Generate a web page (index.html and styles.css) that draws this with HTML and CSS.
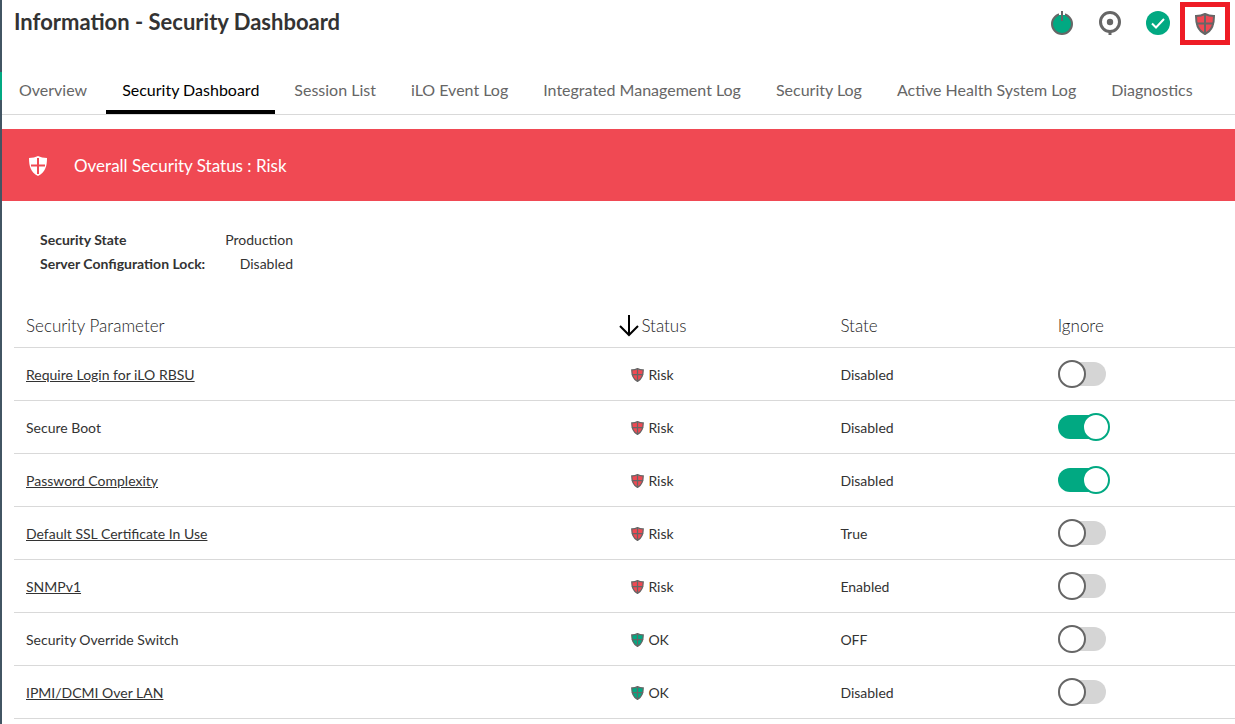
FILE: index.html
```html
<!DOCTYPE html>
<html lang="en">
<head>
<meta charset="utf-8">
<title>Information - Security Dashboard</title>
<link rel="stylesheet" href="styles.css">
</head>
<body>
<svg class="defs" aria-hidden="true">
  <symbol id="shield" viewBox="0 0 20 22">
    <path d="M10 1C7.500 2.300 4.500 3 1 3c0 8 1.500 14 9 18 7.500-4 9-10 9-18-3.500 0-6.500-.7-9-2Z" fill="currentColor" stroke="#666" stroke-width="2"/>
    <path d="M10 1v20M1 10.500h18" stroke="#666" stroke-width="2"/>
  </symbol>
</svg>
<div class="shell">
  <div class="rail"><span class="rail-mark"></span></div>
  <div class="page">
    <header class="header">
      <h1 class="title">Information - Security Dashboard</h1>
      <div class="actions">
        <button class="action" aria-label="Power"><svg class="action-icon" viewBox="0 0 24 24"><circle cx="12" cy="13" r="10" fill="#01a982" stroke="#666" stroke-width="2"/><path d="M9 0h6v5H9z" fill="#fff"/><path d="M9 4h6v3H9z" fill="#01a982"/><path d="M12 0v10" stroke="#666" stroke-width="2"/></svg></button>
        <button class="action" aria-label="Locate"><svg class="action-icon" viewBox="0 0 24 24" fill="none" stroke="#666"><circle cx="12" cy="11" r="9.500" stroke-width="3"/><circle cx="12" cy="11" r="3.200" fill="#666" stroke="none"/><path d="M12 20v4" stroke-width="3"/></svg></button>
        <button class="action" aria-label="Health OK"><svg class="action-icon" viewBox="0 0 24 24"><circle cx="12" cy="12" r="12" fill="#01a982"/><path d="m6 12.500 4 4 8-8.500" fill="none" stroke="#fff" stroke-width="2"/></svg></button>
        <button class="action action-marked" aria-label="Security risk"><svg class="action-shield risk"><use href="#shield"/></svg></button>
      </div>
    </header>
    <nav class="tabs">
      <a class="tab" href="#overview">Overview</a>
      <a class="tab tab-active" href="#security" aria-current="page">Security Dashboard</a>
      <a class="tab" href="#sessions">Session List</a>
      <a class="tab" href="#events">iLO Event Log</a>
      <a class="tab" href="#iml">Integrated Management Log</a>
      <a class="tab" href="#seclog">Security Log</a>
      <a class="tab" href="#ahs">Active Health System Log</a>
      <a class="tab" href="#diagnostics">Diagnostics</a>
    </nav>
    <div class="banner">
      <svg class="banner-icon" viewBox="0 0 20 22"><path d="M10 1C7.500 2.300 4.500 3 1 3c0 8 1.500 14 9 18 7.500-4 9-10 9-18-3.500 0-6.500-.7-9-2Z" fill="#fff"/><path d="M10 3v16M3 10.500h14" stroke="#f04953" stroke-width="2"/></svg>
      <span>Overall Security Status : Risk</span>
    </div>
    <dl class="summary">
      <dt>Security State</dt><dd>Production</dd>
      <dt>Server Configuration Lock:</dt><dd>Disabled</dd>
    </dl>
    <table class="params">
      <thead>
        <tr>
          <th class="col-name">Security Parameter</th>
          <th class="col-status"><button class="sort"><svg class="sort-icon" viewBox="0 0 20 22" fill="none" stroke="#000" stroke-width="2"><path d="M10 0v20M1 11l9 9 9-9"/></svg>Status</button></th>
          <th class="col-state">State</th>
          <th>Ignore</th>
        </tr>
      </thead>
      <tbody>
        <tr><td><a class="link" href="#rbsu">Require Login for iLO RBSU</a></td><td><span class="status"><svg class="status-icon risk"><use href="#shield"/></svg>Risk</span></td><td>Disabled</td><td><input class="switch" type="checkbox" aria-label="Ignore Require Login for iLO RBSU"></td></tr>
        <tr><td>Secure Boot</td><td><span class="status"><svg class="status-icon risk"><use href="#shield"/></svg>Risk</span></td><td>Disabled</td><td><input class="switch" type="checkbox" aria-label="Ignore Secure Boot" checked></td></tr>
        <tr><td><a class="link" href="#password">Password Complexity</a></td><td><span class="status"><svg class="status-icon risk"><use href="#shield"/></svg>Risk</span></td><td>Disabled</td><td><input class="switch" type="checkbox" aria-label="Ignore Password Complexity" checked></td></tr>
        <tr><td><a class="link" href="#ssl">Default SSL Certificate In Use</a></td><td><span class="status"><svg class="status-icon risk"><use href="#shield"/></svg>Risk</span></td><td>True</td><td><input class="switch" type="checkbox" aria-label="Ignore Default SSL Certificate In Use"></td></tr>
        <tr><td><a class="link" href="#snmp">SNMPv1</a></td><td><span class="status"><svg class="status-icon risk"><use href="#shield"/></svg>Risk</span></td><td>Enabled</td><td><input class="switch" type="checkbox" aria-label="Ignore SNMPv1"></td></tr>
        <tr><td>Security Override Switch</td><td><span class="status"><svg class="status-icon ok"><use href="#shield"/></svg>OK</span></td><td>OFF</td><td><input class="switch" type="checkbox" aria-label="Ignore Security Override Switch"></td></tr>
        <tr><td><a class="link" href="#ipmi">IPMI/DCMI Over LAN</a></td><td><span class="status"><svg class="status-icon ok"><use href="#shield"/></svg>OK</span></td><td>Disabled</td><td><input class="switch" type="checkbox" aria-label="Ignore IPMI/DCMI Over LAN"></td></tr>
      </tbody>
    </table>
  </div>
</div>
</body>
</html>
```
FILE: styles.css
```css
*, *::before, *::after { box-sizing: border-box; }
body {
  margin: 0;
  background: #fff;
  color: #333;
  font: 14px/24px Lato, "Open Sans", sans-serif;
}
button { padding: 0; border: 0; background: none; color: inherit; font: inherit; cursor: pointer; }
svg { display: block; flex: none; }
.defs { position: absolute; width: 0; height: 0; }
.risk { color: #f04953; }
.ok { color: #01a982; }

.shell { display: flex; min-height: 100vh; }
.rail { flex: none; width: 2px; padding-top: 72px; background: #425563; }
.rail-mark { display: block; height: 28px; background: #01a982; }
.page { flex: 1; min-width: 0; }

.header { display: flex; align-items: flex-start; justify-content: space-between; padding: 2px 5px 0 12px; height: 68px; }
.title { margin: 0; font-size: 22px; line-height: 40px; font-weight: 700; }
.actions { display: flex; align-items: flex-start; }
.action { display: flex; align-items: center; justify-content: center; width: 48px; height: 42px; }
.action-icon { width: 24px; height: 24px; }
.action-marked { width: 50px; height: 43px; margin-left: -2px; border: 5px solid #ee1c25; }
.action-shield { width: 20px; height: 22px; }

.tabs { display: flex; gap: 3px; padding-left: 1px; border-bottom: 1px solid #d9d9d9; }
.tab { padding: 2px 16px 0; border-bottom: 4px solid transparent; color: #666; font-size: 16px; line-height: 40px; text-decoration: none; white-space: nowrap; }
.tab-active { color: #000; border-color: #000; }

.banner { display: flex; align-items: center; gap: 26px; margin-top: 14px; padding: 2px 26px 0; height: 72px; background: #f04953; color: #fff; font-size: 17px; }
.banner-icon { width: 20px; height: 22px; }

.summary { display: grid; grid-template-columns: max-content max-content; column-gap: 20px; margin: 27px 38px 0; }
.summary dt { font-weight: 700; }
.summary dd { margin: 0; text-align: right; }

.params { width: calc(100% - 12px); margin: 27px 0 0 12px; border-collapse: collapse; table-layout: fixed; }
.params th, .params td { padding: 0 0 0 12px; border-bottom: 1px solid #d9d9d9; text-align: left; }
.params th { height: 44px; padding-top: 2px; color: #222; font-size: 17px; font-weight: 300; }
.params td { height: 53px; padding-top: 2px; }
.params td:last-child { padding-top: 0; }
.col-name { width: 48.600%; }
.col-status { width: 18.100%; }
.col-state { width: 17.800%; }
.sort { display: flex; align-items: center; gap: 2px; }
.sort-icon { width: 20px; height: 22px; }
.link { color: inherit; }
.status { display: flex; align-items: center; gap: 4px; padding-left: 12px; }
.status-icon { width: 13px; height: 14px; }

.switch { appearance: none; display: block; position: relative; width: 52px; height: 28px; margin: 0; cursor: pointer; }
.switch::before { content: ""; position: absolute; inset: 2px 4px 2px 0; border-radius: 12px; background: #d5d5d5; }
.switch::after { content: ""; position: absolute; top: 0; left: 0; width: 28px; height: 28px; border: 2px solid #666; border-radius: 50%; background: #fff; }
.switch:checked::before { background: #01a982; }
.switch:checked::after { left: 24px; border-color: #01a982; }
```
